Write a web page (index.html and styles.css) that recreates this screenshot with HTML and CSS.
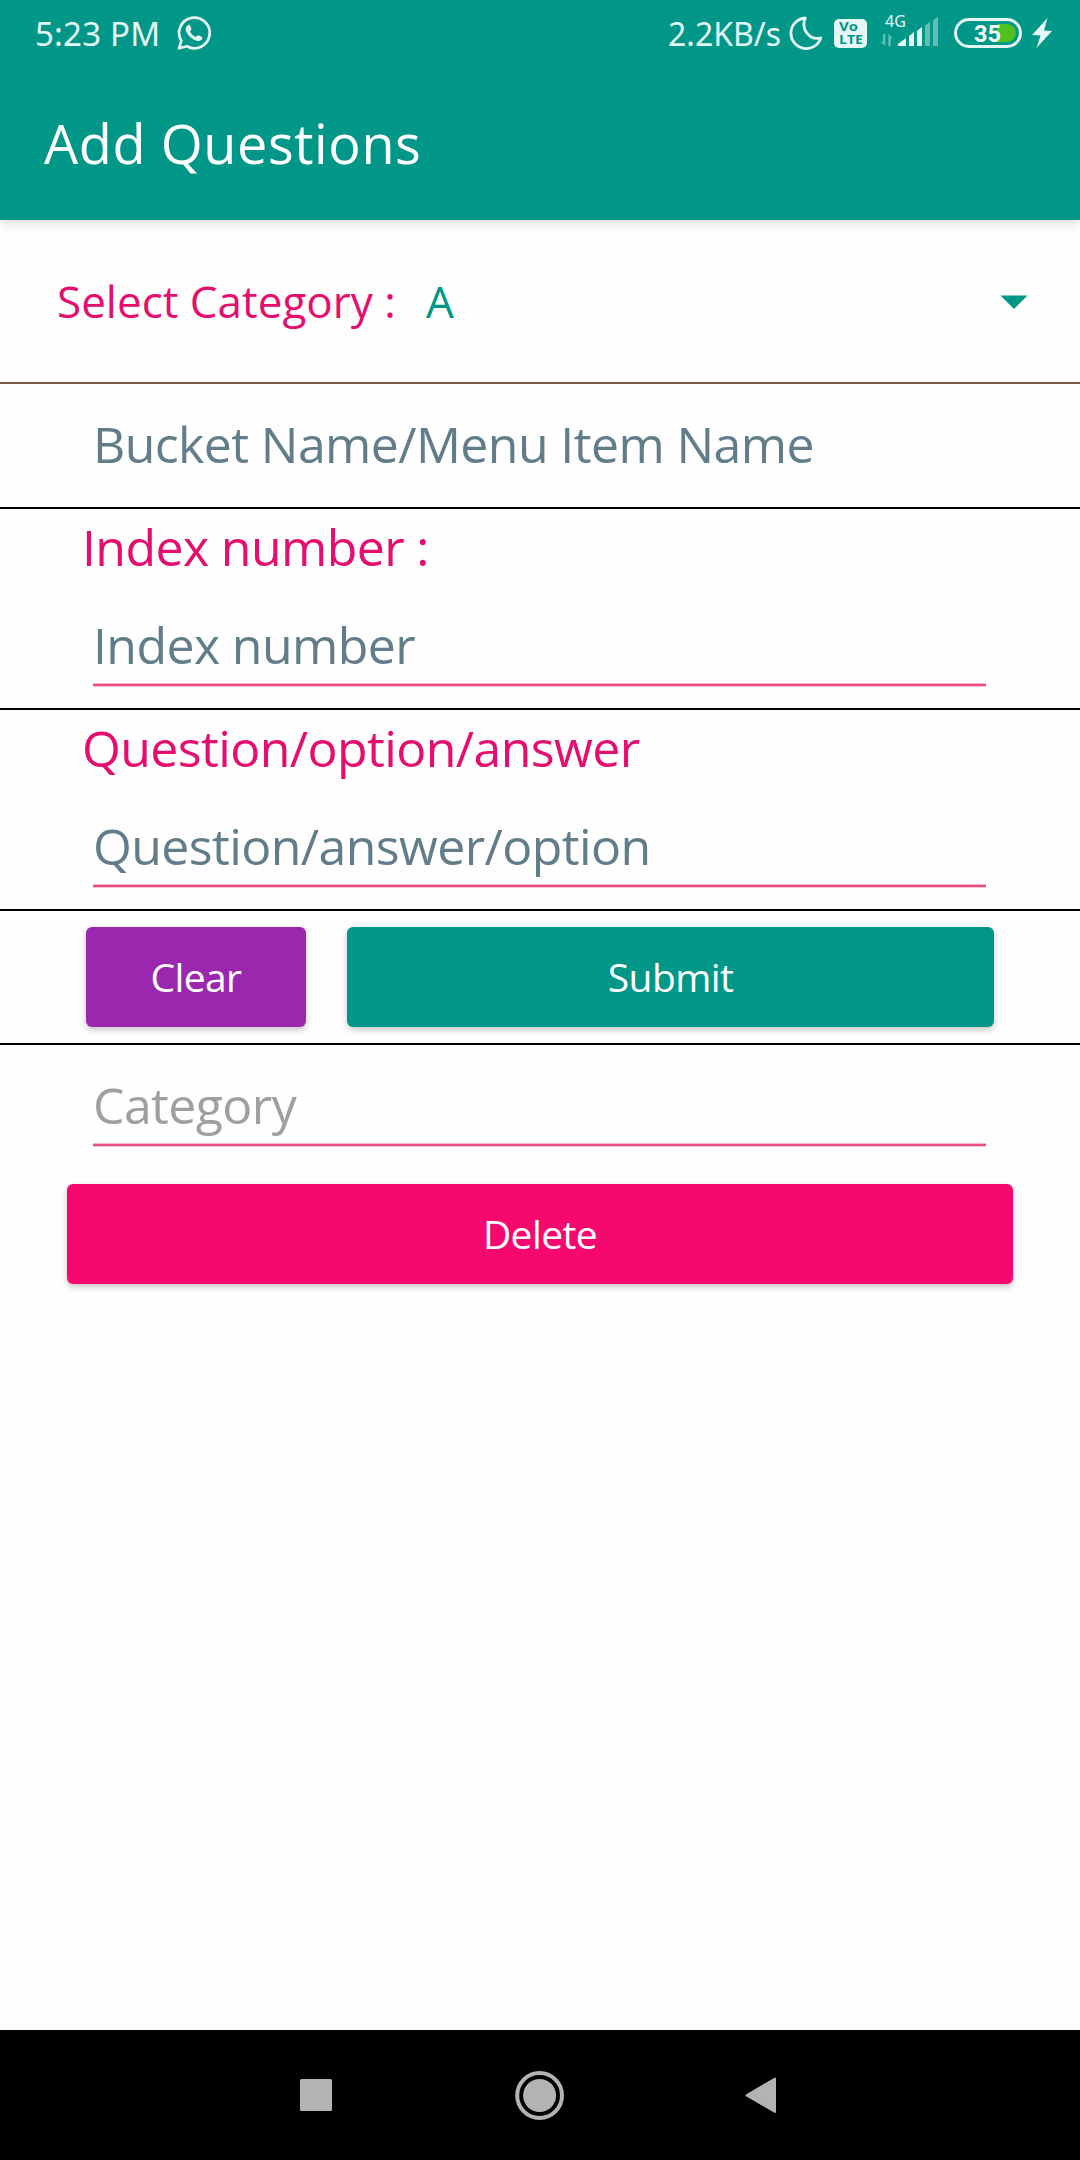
FILE: index.html
```html
<!DOCTYPE html>
<html lang="en">
<head>
  <meta charset="UTF-8" />
  <meta name="viewport" content="width=device-width, initial-scale=1.0" />
  <title>Add Questions</title>
  <link rel="stylesheet" href="styles.css">
</head>
<body>
  <header class="app-header">
    <div class="status-bar">
      <div class="status-left">
        <span class="clock">5:23 PM</span>
        <svg class="whatsapp" width="34" height="34" viewBox="0 0 34 34">
          <path d="M2 32.3 L4.3 24.8 A15.3 15.3 0 1 1 10 30.3 Z" fill="none" stroke="#e4f7f4" stroke-width="2.7" stroke-linejoin="round" />
          <path d="M10.7 9.2 C11.6 8.5 12.8 8.9 13.2 9.9 L14.4 12.7 C14.8 13.7 13.3 14.9 13 15.5 C14.2 18 16.2 20 18.9 21 C19.6 20.7 20.5 19 21.5 19.3 L24.8 20.9 C26 21.6 25.2 23.4 24.2 24.1 C21.9 25.7 19 24.8 16.6 23.4 C13.6 21.7 11 19 9.4 16 C8.1 13.5 8.5 10.8 10.7 9.2 Z" fill="#e4f7f4" />
        </svg>
      </div>
      <div class="status-right">
        <span class="speed">2.2KB/s</span>
        <svg class="moon" width="34" height="34" viewBox="0 0 34 34">
          <path d="M16.2 2 A15.3 15.3 0 1 0 31.8 21.8 C21 25 11.5 13.5 16.2 2 Z" fill="none" stroke="#e4f7f4" stroke-width="2.8" stroke-linejoin="round" />
        </svg>
        <svg class="volte" width="33" height="29" viewBox="0 0 33 29">
          <rect width="33" height="29" rx="5" fill="#e4f7f4" />
          <text x="5" y="12.2" textLength="19" lengthAdjust="spacingAndGlyphs">Vo</text>
          <text x="5" y="25.4" textLength="24" lengthAdjust="spacingAndGlyphs">LTE</text>
        </svg>
        <svg class="signal" width="60" height="44" viewBox="0 -8 60 44">
          <text class="network" x="5" y="13">4G</text>
          <g fill="#64bdb3">
            <path d="M3 20 H5.3 V32 L0.5 27.8 H3 Z" />
            <path d="M8.3 20 L13 24.2 H10.8 V32 H8.3 Z" />
            <path d="M45 11.5 L50 7.5 V32 H45 Z" />
            <path d="M53 6.5 L58 2.5 V32 H53 Z" />
          </g>
          <g fill="#e4f7f4">
            <path d="M18 32 V30 L26 24 V32 Z" />
            <path d="M29 22 L34 18 V32 H29 Z" />
            <path d="M37 17 L42 13 V32 H37 Z" />
          </g>
        </svg>
        <svg class="battery" width="68" height="30" viewBox="0 0 68 30">
          <rect x="1.5" y="1.5" width="65" height="27" rx="13.5" fill="none" stroke="#e4f7f4" stroke-width="3" />
          <path d="M43 6 H53 A9 9 0 0 1 53 24 H43 Z" fill="#4fc222" />
          <text class="level" x="20" y="24" textLength="27" lengthAdjust="spacingAndGlyphs">35</text>
        </svg>
        <svg class="bolt" width="20" height="30" viewBox="0 0 20 30">
          <path d="M15.5 0 L0 17 L8.5 17.5 L4.5 30 L20 13 L12 12.5 Z" fill="#e4f7f4" />
        </svg>
      </div>
    </div>
    <h1 class="title">Add Questions</h1>
  </header>

  <main class="content">
    <div class="category-row">
      <label for="category">Select Category :</label>
      <div class="spinner" id="category">
        <span>A</span>
        <svg width="28" height="16" viewBox="0 -2 28 16">
          <path d="M0.5 0.5 H27.5 L14 14 Z" fill="#009788" />
        </svg>
      </div>
    </div>

    <div class="bucket-row">
      <input class="plain" type="text" placeholder="Bucket Name/Menu Item Name">
    </div>

    <div class="section">
      <label for="indexNumber">Index number :</label>
      <input type="text" id="indexNumber" placeholder="Index number">
    </div>

    <div class="section">
      <label for="question">Question/option/answer</label>
      <input type="text" id="question" placeholder="Question/answer/option">
    </div>

    <div class="button-group">
      <button class="clear-btn">Clear</button>
      <button class="submit-btn">Submit</button>
    </div>

    <div class="delete-section">
      <input class="muted" type="text" placeholder="Category">
      <button class="delete-btn">Delete</button>
    </div>
  </main>

  <nav class="nav-bar">
    <svg width="32" height="32" viewBox="0 0 32 32">
      <rect width="32" height="32" rx="1.5" fill="#b3b3b3" />
    </svg>
    <svg width="50" height="50" viewBox="0 0 50 50">
      <circle cx="25.6" cy="25.5" r="22.4" fill="none" stroke="#b3b3b3" stroke-width="4" />
      <circle cx="25.6" cy="25.5" r="16.5" fill="#b3b3b3" />
    </svg>
    <svg width="32" height="36" viewBox="0 0 32 36">
      <path d="M30 1.5 V35 L1.5 18.3 Z" fill="#b3b3b3" stroke="#b3b3b3" stroke-width="2" stroke-linejoin="round" />
    </svg>
  </nav>
</body>
</html>
```
FILE: styles.css
```css
:root {
  --primary: #009788;
  --accent: #f7086e;
  --label: #e50e6e;
  --hint: #627d8a;
  --status: #e4f7f4;
}

* {
  box-sizing: border-box;
}

body {
  margin: 0;
  height: 2160px;
  display: flex;
  flex-direction: column;
  font-family: 'Open Sans', 'Noto Sans', sans-serif;
  background: #fefefe;
}

.app-header {
  height: 220px;
  background: var(--primary);
  box-shadow: 0 3px 12px rgba(0, 0, 0, 0.14);
}

.status-bar {
  display: flex;
  justify-content: space-between;
  height: 66px;
  padding: 0 28px 0 35px;
  font-family: 'Noto Sans', sans-serif;
  color: var(--status);
}

.status-left, .status-right {
  display: flex;
  align-items: center;
}

.clock {
  width: 142px;
  font-size: 33px;
  letter-spacing: 0.2px;
  white-space: nowrap;
}

.speed {
  width: 121px;
  font-size: 32px;
  white-space: nowrap;
}

.volte {
  margin-left: 11px;
  font: bold 13px 'Open Sans', sans-serif;
  fill: var(--primary);
}

.signal {
  margin: -11px 0 0 13px;
}

.network {
  font-size: 16px;
  fill: var(--status);
}

.battery {
  margin-left: 14px;
}

.level {
  font: bold 24px Roboto, sans-serif;
  fill: #f2fbf9;
}

.bolt {
  margin-left: 10px;
}

.title {
  margin: 0;
  padding-left: 44px;
  font-size: 54px;
  font-weight: 400;
  line-height: 154px;
  letter-spacing: 0.6px;
  color: #fff;
}

.content {
  flex: 1;
}

.category-row {
  display: flex;
  align-items: center;
  height: 164px;
  padding: 0 52px 0 57px;
  border-bottom: 2px solid #795548;
  font-size: 44px;
  color: var(--label);
}

.category-row label {
  width: 369px;
}

.spinner {
  flex: 1;
  display: flex;
  align-items: center;
  justify-content: space-between;
  color: var(--primary);
}

.bucket-row {
  height: 125px;
  padding: 0 93px;
  border-bottom: 2px solid #000;
}

.section {
  height: 201px;
  padding: 0 94px 0 93px;
  border-bottom: 2px solid #000;
}

.section label {
  display: block;
  margin-left: -11px;
  font-size: 50px;
  line-height: 76px;
  letter-spacing: -0.6px;
  color: var(--label);
}

input {
  display: block;
  width: 100%;
  height: 101px;
  padding: 21px 0 0;
  border: none;
  border-bottom: 2px solid #ea4c87;
  border-radius: 0;
  box-shadow: 0 1px 0 #f9c6da, inset 0 -1px 0 #f7b5ce;
  background: transparent;
  font-family: inherit;
  font-size: 50px;
  letter-spacing: -0.6px;
  outline: none;
}

input::placeholder {
  color: var(--hint);
  opacity: 1;
}

input.plain {
  height: 119px;
  padding: 0;
  border: none;
  box-shadow: none;
}

input.muted::placeholder {
  color: #9f9f9f;
}

.button-group {
  display: flex;
  gap: 41px;
  height: 134px;
  padding: 16px 86px;
  border-bottom: 2px solid #000;
}

button {
  height: 100px;
  padding: 0 0 2px;
  border: none;
  border-radius: 6px;
  font-family: inherit;
  font-size: 39px;
  letter-spacing: -0.6px;
  color: #fff;
  box-shadow: 0 3px 6px rgba(0, 0, 0, 0.22);
}

.clear-btn {
  width: 220px;
  background: #9b27af;
}

.submit-btn {
  flex: 1;
  background: var(--primary);
}

.delete-section {
  padding: 0 67px;
}

.delete-section input {
  width: 893px;
  margin: 0 26px 38px;
}

.delete-btn {
  width: 100%;
  background: var(--accent);
}

.nav-bar {
  display: flex;
  align-items: center;
  justify-content: space-between;
  height: 130px;
  padding: 0 303px 0 300px;
  background: #000;
}
```
